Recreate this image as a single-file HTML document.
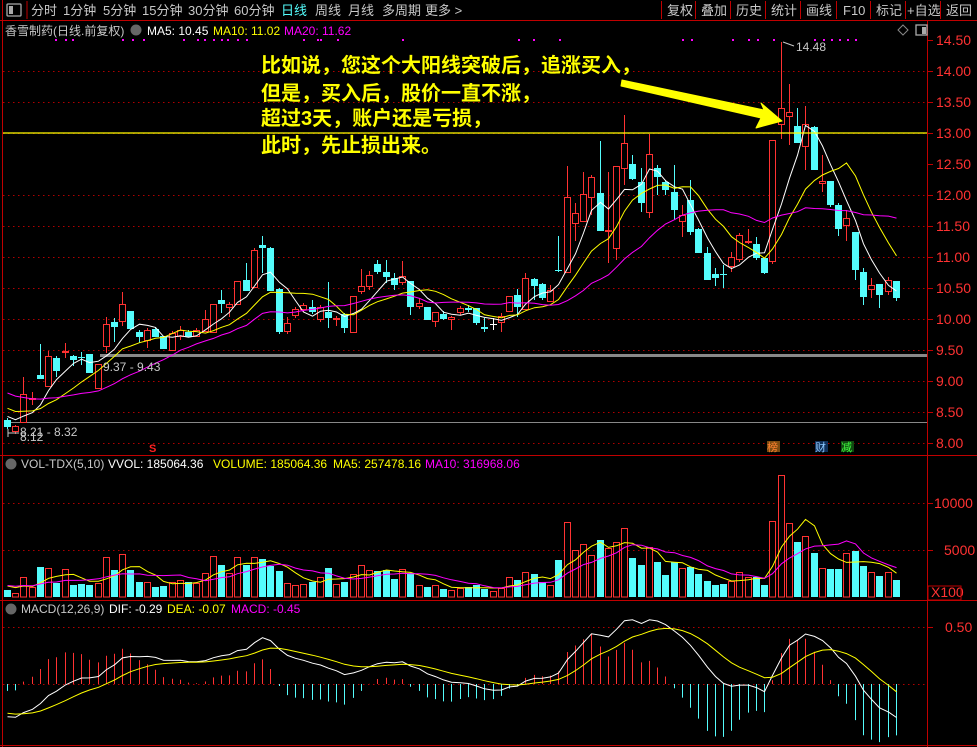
<!DOCTYPE html>
<html><head><meta charset="utf-8"><style>
html,body{margin:0;padding:0;background:#000;width:977px;height:747px;overflow:hidden}
svg{display:block}
text{font-family:"Liberation Sans","Noto Sans CJK SC",sans-serif}
</style></head><body>
<svg id="s" width="977" height="747" xmlns="http://www.w3.org/2000/svg">
<rect width="977" height="747" fill="#000"/>
<g font-size="13" fill="#c8c8c8">
<rect x="7" y="4" width="14" height="12" fill="none" stroke="#aaa" stroke-width="1.3" rx="1"/>
<rect x="9" y="6" width="4" height="8" fill="#aaa"/>
<text x="31" y="15">分时</text><text x="63" y="15">1分钟</text><text x="103" y="15">5分钟</text><text x="142" y="15">15分钟</text><text x="188" y="15">30分钟</text><text x="234" y="15">60分钟</text><text x="281" y="15" fill="#54fcfc">日线</text><text x="315" y="15">周线</text><text x="348" y="15">月线</text><text x="382" y="15">多周期</text><text x="425" y="15">更多 &gt;</text>
<text x="667" y="15">复权</text><text x="701" y="15">叠加</text><text x="736" y="15">历史</text><text x="771" y="15">统计</text><text x="806" y="15">画线</text><text x="843" y="15">F10</text><text x="876" y="15">标记</text><text x="907" y="15">+自选</text><text x="946" y="15">返回</text>
</g>
<g stroke="#c00000" stroke-width="1">
<line x1="27" y1="1" x2="27" y2="19"/>
<line x1="661.5" y1="1" x2="661.5" y2="19"/><line x1="695.5" y1="1" x2="695.5" y2="19"/><line x1="730.5" y1="1" x2="730.5" y2="19"/><line x1="765.5" y1="1" x2="765.5" y2="19"/><line x1="800.5" y1="1" x2="800.5" y2="19"/><line x1="836.5" y1="1" x2="836.5" y2="19"/><line x1="870.5" y1="1" x2="870.5" y2="19"/><line x1="905.5" y1="1" x2="905.5" y2="19"/><line x1="940.5" y1="1" x2="940.5" y2="19"/>
<line x1="0" y1="20.5" x2="977" y2="20.5"/>
<line x1="2.5" y1="0" x2="2.5" y2="747"/>
<line x1="927.5" y1="20" x2="927.5" y2="747"/>
<line x1="0" y1="455.5" x2="977" y2="455.5"/>
<line x1="0" y1="600.5" x2="977" y2="600.5"/>
<line x1="0" y1="745.5" x2="977" y2="745.5"/>
</g>
<g font-size="12">
<text x="5" y="35" fill="#c8c8c8">香雪制药(日线.前复权)</text>
<circle cx="136" cy="30" r="5.5" fill="#666"/>
<text x="147" y="35" fill="#fff">MA5: 10.45</text>
<text x="213" y="35" fill="#ffff00">MA10: 11.02</text>
<text x="284" y="35" fill="#ff00ff">MA20: 11.62</text>
</g>
<path d="M903 25 L908 30 L903 35 L898 30 Z" fill="none" stroke="#888"/>
<rect x="916" y="25" width="11" height="10" fill="none" stroke="#aaa" stroke-width="1.3"/>
<rect x="922" y="27" width="4" height="7" fill="#aaa"/>
<g id="grid"></g>
<g id="draw"></g>
<g font-size="14" fill="#ff3232">
<text x="936" y="45">14.50</text><text x="936" y="76">14.00</text><text x="936" y="107">13.50</text><text x="936" y="138">13.00</text><text x="936" y="169">12.50</text><text x="936" y="200">12.00</text><text x="936" y="231">11.50</text><text x="936" y="262">11.00</text><text x="936" y="293">10.50</text><text x="936" y="324">10.00</text><text x="936" y="355">9.50</text><text x="936" y="386">9.00</text><text x="936" y="417">8.50</text><text x="936" y="448">8.00</text>
<text x="934" y="508">10000</text><text x="944" y="555">5000</text>
<text x="931" y="597">X100</text>
<text x="945" y="632">0.50</text>
</g>
<rect x="928" y="586" width="33" height="14" fill="none" stroke="#c00000"/>
<g font-size="12" fill="#c8c8c8">
<text x="103" y="371">9.37 - 9.43</text>
<text x="20" y="436">8.21 - 8.32</text>
<text x="20" y="441">8.12</text>
<text x="796" y="51">14.48</text>
</g>
<path d="M8 433 L19 433 M8 429 L8 437" stroke="#c8c8c8" fill="none"/>
<path d="M783 42 L794 46" stroke="#c8c8c8" fill="none"/>
<text x="149" y="452" font-size="11" fill="#ff2020" font-weight="bold">S</text>
<rect x="767" y="441" width="13" height="11" fill="#7a4a10"/><text x="767" y="451" font-size="11" fill="#ff8030">榜</text>
<rect x="815" y="441" width="13" height="11" fill="#10305a"/><text x="815" y="451" font-size="11" fill="#8cc8ff">财</text>
<rect x="841" y="441" width="13" height="11" fill="#104a10"/><text x="841" y="451" font-size="11" fill="#40ff40">减</text>
<g font-size="12">
<circle cx="11" cy="464" r="5.5" fill="#666"/>
<text x="21" y="468" fill="#c8c8c8">VOL-TDX(5,10)</text>
<text x="108" y="468" fill="#fff">VVOL: 185064.36</text>
<text x="213" y="468" fill="#ffff00">VOLUME: 185064.36</text>
<text x="333" y="468" fill="#ffff00">MA5: 257478.16</text>
<text x="425" y="468" fill="#ff00ff">MA10: 316968.06</text>
<circle cx="11" cy="609" r="5.5" fill="#666"/>
<text x="21" y="613" fill="#c8c8c8">MACD(12,26,9)</text>
<text x="109" y="613" fill="#fff">DIF: -0.29</text>
<text x="167" y="613" fill="#ffff00">DEA: -0.07</text>
<text x="231" y="613" fill="#ff00ff">MACD: -0.45</text>
</g>
<line x1="3" y1="133" x2="927" y2="133" stroke="#ffff00" stroke-width="1.3"/>
<g font-size="20" font-weight="bold" fill="#ffff00" style="font-family:'Noto Sans CJK SC',sans-serif">
<text x="261" y="72">比如说，您这个大阳线突破后，追涨买入，</text>
<text x="261" y="100">但是，买入后，股价一直不涨，</text>
<text x="261" y="125">超过3天，账户还是亏损，</text>
<text x="261" y="152">此时，先止损出来。</text>
</g>
<path d="M622 80 L764 110 L761 103 L782 121 L756 128 L761 118 L621 86 Z" fill="#ffff00" stroke="#ffff00" stroke-width="1" stroke-linejoin="round"/>
</svg>
<script>
var D=[
['c',420,427,418,429],['r',426,432,425,434],['r',394,423,377,423],['r',398,400,392,405],['c',375,379,344,379],['r',356,387,351,387],['c',358,371,356,377],['r',351,353,343,358],['c',356,360,355,366],['c',357,358,352,365],
['c',354,373,354,373],['r',364,389,364,389],['r',324,347,317,353],['c',322,327,318,342],['r',304,322,292,326],['c',311,329,311,329],['c',332,337,330,343],['r',330,341,328,348],['c',329,337,327,337],['c',336,349,336,349],
['r',333,351,331,351],['r',330,337,326,340],['c',332,337,330,337],['r',330,337,328,337],['r',319,332,310,332],['r',304,333,304,333],['c',300,304,290,313],['r',304,308,302,317],['r',281,305,281,305],['c',280,291,263,291],
['r',250,288,248,288],['c',245,248,236,273],['c',248,291,247,291],['c',289,332,288,334],['r',323,332,317,334],['r',309,316,307,318],['r',305,310,303,312],['c',307,312,300,314],['r',307,320,305,322],['c',312,318,282,328],
['r',318,320,316,326],['c',314,328,313,333],['r',296,333,296,333],['r',286,292,269,294],['r',275,287,271,290],['c',264,272,260,274],['c',272,277,260,283],['c',278,285,273,290],['r',276,283,261,285],['c',281,307,281,315],
['r',303,307,299,309],['c',307,320,307,320],['r',312,322,312,327],['c',314,319,311,320],['r',317,320,316,330],['r',308,313,306,315],['c',308,310,305,312],['c',308,323,308,325],['c',327,329,318,332],['w',324,325,318,330],
['r',316,323,313,332],['r',296,312,296,312],['c',295,307,289,317],['r',278,310,273,310],['c',279,286,278,300],['c',284,298,283,300],['r',290,302,285,302],['c',270,271,236,272],['r',197,273,166,273],['r',213,224,203,241],
['r',194,222,172,222],['r',177,198,175,215],['c',193,231,141,231],['r',230,232,172,263],['r',166,249,166,260],['r',143,169,115,185],['c',164,179,155,180],['c',182,203,168,212],['r',154,213,134,218],['c',168,177,165,195],
['c',182,190,180,195],['c',192,210,165,220],['r',215,222,205,237],['c',200,232,180,235],['c',229,253,228,253],['c',253,280,247,280],['c',274,278,268,286],['c',274,275,265,288],['r',257,267,252,272],['r',235,260,233,262],
['r',241,243,229,244],['c',244,258,237,260],['c',258,273,258,274],['r',140,262,140,264],['r',108,125,42,139],['r',112,117,84,145],['c',126,143,108,143],['r',124,147,106,170],['c',127,170,126,170],['r',181,184,155,192],
['c',181,205,181,207],['c',205,229,203,236],['r',218,226,210,241],['c',232,270,232,280],['c',272,297,268,305],['r',285,290,278,298],['c',284,295,284,308],['r',280,292,277,295],['c',281,298,281,301]];
var V=[590,593,577,587,567,568,583,569,585,584,585,583,557,570,554,570,582,582,587,586,582,580,582,583,573,556,565,573,557,565,557,559,566,571,583,585,584,582,577,568,584,582,574,565,570,571,570,579,569,573,585,587,585,589,590,588,587,585,589,591,588,577,580,572,574,582,585,560,522,550,544,555,540,548,542,528,558,565,547,562,575,562,568,567,574,581,585,584,581,572,577,577,585,521,475,523,542,536,553,568,569,569,553,551,566,572,576,572,580];
var NS='http://www.w3.org/2000/svg',g=document.getElementById('draw'),gr=document.getElementById('grid');
function el(p,t,a){var e=document.createElementNS(NS,t);for(var k in a)e.setAttribute(k,a[k]);p.appendChild(e);return e;}
for(var k=1;k<=13;k++){var y=40+k*31;if(k==4)continue;el(gr,'line',{x1:3,y1:y+0.5,x2:927,y2:y+0.5,stroke:'#b00000','stroke-dasharray':'1.5,3.5'});}
[503,550,627,684].forEach(function(y){el(gr,'line',{x1:3,y1:y+0.5,x2:927,y2:y+0.5,stroke:'#b00000','stroke-dasharray':'1.5,3.5'});});
[40,71,102,133,164,195,226,257,288,319,350,381,412,443,503,550,627].forEach(function(y){el(gr,'line',{x1:927,y1:y+0.5,x2:933,y2:y+0.5,stroke:'#c00000'});});
el(gr,'rect',{x:100,y:354,width:827,height:3,fill:'#888'});
el(gr,'line',{x1:8,y1:422.5,x2:927,y2:422.5,stroke:'#888'});
[55,65,72,122,132,143,183,197,204,213,221,227,237,246,303,317,320,337,402,518,533,559,682,691,732,748,757,773,814,823,831,839,847,855].forEach(function(x){el(gr,'rect',{x:x,y:39,width:2,height:2,fill:'#ff00ff'});});
var RED='#ff3232',CY='#54fcfc';
function X(i){return Math.round(7+8.23*i)+0.5;}
function P(y){return 14.5-(y-40)/62;}
function Y(p){return 40+(14.5-p)*62;}
var closes=[];for(var j=0;j<30;j++)closes.push(9.8-1.4*j/29);
var pad=closes.length;
D.forEach(function(d){closes.push(P(d[0]=='c'?d[2]:d[1]));});
function ma(arr,n,i){var s=0;for(var k=i-n+1;k<=i;k++)s+=arr[k];return s/n;}
function line(pts,c){el(g,'polyline',{points:pts.join(' '),fill:'none',stroke:c,'stroke-width':1});}
D.forEach(function(d,i){
 var x=X(i),col=d[0]=='c'?CY:(d[0]=='w'?'#fff':RED);
 el(g,'line',{x1:x,y1:d[3],x2:x,y2:d[4],stroke:col});
 var h=Math.max(1,d[2]-d[1]);
 if(d[0]=='c')el(g,'rect',{x:x-3.5,y:d[1],width:7,height:h,fill:CY});
 else if(h<=2)el(g,'rect',{x:x-3.5,y:d[1],width:7,height:h,fill:col});
 else el(g,'rect',{x:x-3,y:d[1]+0.5,width:6,height:h-1,fill:'#000',stroke:col});
 var vt=V[i];
 if(d[0]=='c')el(g,'rect',{x:x-3.5,y:vt,width:7,height:597-vt,fill:CY});
 else el(g,'rect',{x:x-3,y:vt+0.5,width:6,height:597-vt-0.5,fill:'#000',stroke:RED});
});
[[5,'#fff'],[10,'#ffff00'],[20,'#ff00ff']].forEach(function(m){var pts=[];for(var i=0;i<D.length;i++){pts.push(X(i)+','+Y(ma(closes,m[0],pad+i)).toFixed(1));}line(pts,m[1]);});
var vv=[];for(var j=0;j<10;j++)vv.push(12);V.forEach(function(t){vv.push(597-t);});
[[5,'#ffff00'],[10,'#ff00ff']].forEach(function(m){var pts=[];for(var i=0;i<V.length;i++){pts.push(X(i)+','+(597-ma(vv,m[0],10+i)).toFixed(1));}line(pts,m[1]);});
var e12=closes[0],e26=closes[0],dea=0,dif=[],de=[];
closes.forEach(function(c,i){e12=e12*11/13+c*2/13;e26=e26*25/27+c*2/27;var d=e12-e26;dea=dea*8/10+d*2/10;dif.push(d);de.push(dea);});
var p1=[],p2=[];
for(var i=0;i<D.length;i++){var d=dif[pad+i],a=de[pad+i],h=2*(d-a),x=X(i);
 el(g,'line',{x1:x,y1:684,x2:x,y2:684-h*114,stroke:h>0?RED:CY});
 p1.push(x+','+(684-d*114).toFixed(1));p2.push(x+','+(684-a*114).toFixed(1));}
line(p1,'#fff');line(p2,'#ffff00');
</script>
</body></html>
